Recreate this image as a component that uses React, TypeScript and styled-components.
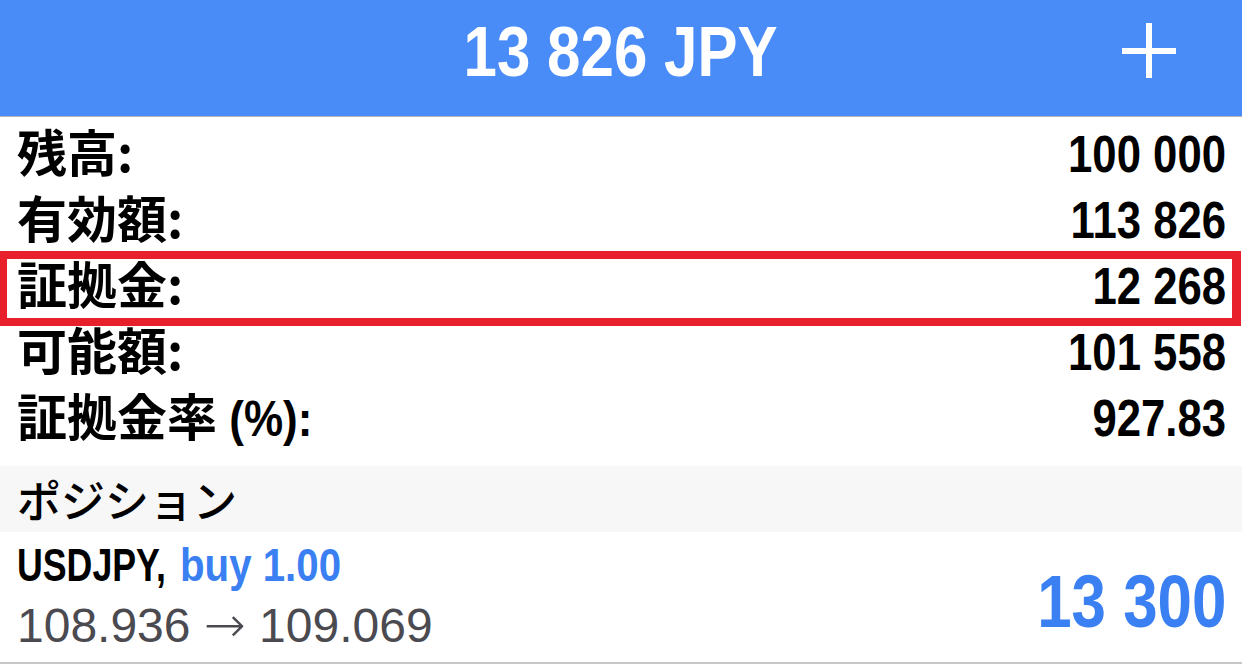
import React from "react";
import styled, { createGlobalStyle } from "styled-components";

const GlobalStyle = createGlobalStyle`
  html, body {
    margin: 0;
    padding: 0;
    background: #ffffff;
  }
  body {
    font-family: "Liberation Sans", "Noto Sans CJK JP", sans-serif;
    -webkit-font-smoothing: antialiased;
  }
`;

const SANS = `"Liberation Sans", "Noto Sans CJK JP", sans-serif`;
const CJK = `"Noto Sans CJK JP", sans-serif`;

const Page = styled.div`
  width: 1242px;
  height: 664px;
  overflow: hidden;
  display: flex;
  flex-direction: column;
  background: #ffffff;
`;

const Header = styled.header`
  height: 116px;
  flex: none;
  background: #4a8cf7;
  border-bottom: 1px solid #b4b4b4;
  display: grid;
  grid-template-columns: 1fr auto 1fr;
  align-items: center;
`;

/* condensed bold text: no narrow face is installed, so squeeze horizontally */
const Condensed = styled.span<{ $scale: number; $origin: string }>`
  display: inline-block;
  white-space: nowrap;
  transform: scaleX(${(p) => p.$scale});
  transform-origin: ${(p) => p.$origin};
`;

const Title = styled.h1`
  grid-column: 2;
  margin: 0;
  color: #ffffff;
  font-family: ${SANS};
  font-weight: 700;
  font-size: 71px;
  line-height: 1;
  padding-bottom: 13px;
`;

const PlusButton = styled.button`
  grid-column: 3;
  justify-self: end;
  margin-right: 66px;
  margin-bottom: 16px;
  width: 54px;
  height: 55px;
  padding: 0;
  border: none;
  background: transparent;
  display: flex;
  cursor: pointer;
`;

const Summary = styled.section`
  padding-top: 6px;
  padding-bottom: 13px;
  display: flex;
  flex-direction: column;
`;

const Row = styled.div<{ $highlight?: boolean }>`
  position: relative;
  height: 66px;
  padding: 0 16px 0 17px;
  display: flex;
  align-items: center;
  justify-content: space-between;

  ${(p) =>
    p.$highlight &&
    `
    &::after {
      content: "";
      position: absolute;
      left: 0;
      right: 1px;
      top: -4px;
      bottom: -5px;
      border: 8px solid #e8202b;
      border-left-width: 7px;
      border-right-width: 9px;
      pointer-events: none;
    }
  `}
`;

const Label = styled.span`
  font-family: ${CJK};
  font-weight: 700;
  font-size: 50px;
  color: #000000;
  line-height: 1;
  padding-bottom: 12px;
  white-space: nowrap;
`;

const LatinInLabel = styled.span`
  display: inline-block;
  font-family: ${SANS};
  font-weight: 700;
  line-height: 0;
  transform: scaleX(0.88);
  transform-origin: left center;
  margin-right: -12px;
`;

const Value = styled.span`
  font-family: ${SANS};
  font-weight: 700;
  font-size: 52px;
  color: #000000;
  line-height: 1;
  padding-bottom: 4px;
`;

const SectionBar = styled.div`
  height: 66px;
  flex: none;
  background: #f7f7f7;
  padding-left: 17px;
  display: flex;
  align-items: center;
  font-family: ${CJK};
  font-weight: 500;
  font-size: 44px;
  color: #000000;
`;

const Position = styled.div`
  flex: 1;
  border-bottom: 2px solid #c8c8c8;
  padding: 0 16px 0 17px;
  display: flex;
  align-items: center;
  justify-content: space-between;
`;

const PositionInfo = styled.div`
  display: flex;
  flex-direction: column;
  gap: 10px;
  padding-bottom: 2px;
`;

const Symbol = styled.div`
  display: flex;
  font-family: ${SANS};
  font-weight: 700;
  font-size: 47px;
  line-height: 1.05;
  color: #000000;
  white-space: nowrap;
`;

const Side = styled(Condensed)`
  color: #3a80f2;
  margin-left: -33px;
`;

const Prices = styled.div`
  font-family: ${SANS};
  font-weight: 400;
  font-size: 48px;
  line-height: 1.05;
  color: #4a4a50;
  white-space: nowrap;
`;

const Arrow = styled.span`
  font-family: "DejaVu Sans", sans-serif;
  font-weight: 200;
  font-size: 50px;
`;

const Profit = styled.div`
  font-family: ${SANS};
  font-weight: 700;
  font-size: 75px;
  color: #3a80f2;
  line-height: 1;
  padding-top: 8px;
`;

const rows: { label: React.ReactNode; key: string; value: string; highlight?: boolean }[] = [
  { key: "a", label: "残高:", value: "100 000" },
  { key: "b", label: "有効額:", value: "113 826" },
  { key: "c", label: "証拠金:", value: "12 268", highlight: true },
  { key: "d", label: "可能額:", value: "101 558" },
  {
    key: "e",
    label: (
      <>
        証拠金率<LatinInLabel>&nbsp;(%):</LatinInLabel>
      </>
    ),
    value: "927.83",
  },
];

export default function App() {
  return (
    <>
      <GlobalStyle />
      <Page>
        <Header>
          <Title>
            <Condensed $scale={0.846} $origin="center">
              13 826 JPY
            </Condensed>
          </Title>
          <PlusButton aria-label="add">
            <svg width="54" height="55" viewBox="0 0 54 55">
              <rect x="24" y="0" width="6" height="55" fill="#ffffff" />
              <rect x="0" y="25" width="54" height="6" fill="#ffffff" />
            </svg>
          </PlusButton>
        </Header>
        <Summary>
          {rows.map((r) => (
            <Row key={r.key} $highlight={r.highlight}>
              <Label>{r.label}</Label>
              <Value>
                <Condensed $scale={0.84} $origin="right center">
                  {r.value}
                </Condensed>
              </Value>
            </Row>
          ))}
        </Summary>
        <SectionBar>ポジション</SectionBar>
        <Position>
          <PositionInfo>
            <Symbol>
              <Condensed $scale={0.76} $origin="left center">
                USDJPY,
              </Condensed>
              <Side $scale={0.856} $origin="left center">
                buy 1.00
              </Side>
            </Symbol>
            <Prices>
              108.936 <Arrow>→</Arrow> 109.069
            </Prices>
          </PositionInfo>
          <Profit>
            <Condensed $scale={0.825} $origin="right center">
              13 300
            </Condensed>
          </Profit>
        </Position>
      </Page>
    </>
  );
}
